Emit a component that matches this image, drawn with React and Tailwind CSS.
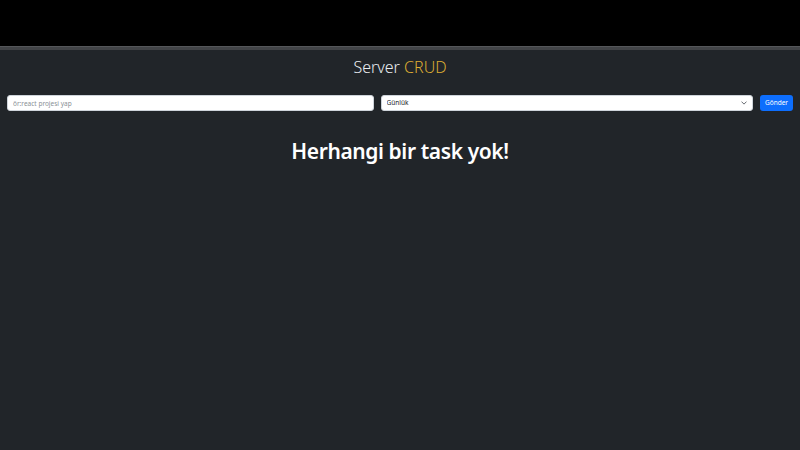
import React from 'react';

export default function App() {
  const [task, setTask] = React.useState('');
  const [period, setPeriod] = React.useState('Günlük');

  return (
    <div className="w-[800px] h-[450px] flex flex-col bg-[#212529] overflow-hidden" style={{ fontFamily: '"Noto Sans", "Open Sans", sans-serif' }}>
      <div className="h-[46px] bg-black shrink-0" />
      <div className="h-[4px] bg-[#424447] border-t border-[#55575a] shrink-0" />

      <h1 className="mt-[4px] text-center text-[16px] font-light text-[#e9ecef] leading-[26px]">
        Server <span className="text-[#dcac33]">CRUD</span>
      </h1>

      <form
        className="mt-[15px] px-[7px] flex items-center gap-[7px] text-[7px] leading-none"
        onSubmit={(e) => e.preventDefault()}
      >
        <input
          value={task}
          onChange={(e) => setTask(e.target.value)}
          placeholder="ör:react projesi yap"
          className="block w-[367px] h-[16px] rounded-[3px] bg-white border border-[#ced4da] px-[5px] text-[6.5px] text-[#212529] placeholder:text-[#8a9096] outline-none"
        />
        <div className="relative w-[373px] h-[16px]">
          <select
            value={period}
            onChange={(e) => setPeriod(e.target.value)}
            className="block appearance-none w-full h-[16px] rounded-[3px] bg-white border border-[#ced4da] px-[5px] text-[6.5px] text-[#212529] outline-none"
          >
            <option>Günlük</option>
            <option>Haftalık</option>
            <option>Aylık</option>
          </select>
          <svg className="absolute right-[6px] top-[5px] w-[6px] h-[6px] pointer-events-none" viewBox="0 0 16 16" fill="none">
            <path d="M2 5l6 6 6-6" stroke="#343a40" strokeWidth="2" strokeLinecap="round" strokeLinejoin="round" />
          </svg>
        </div>
        <button
          type="submit"
          className="block w-[33px] h-[16px] rounded-[3px] bg-[#0d6efd] text-white text-[6.5px] leading-none"
        >
          Gönder
        </button>
      </form>

      <h2 className="mt-[24px] text-center text-[21px] font-semibold tracking-[-0.4px] text-white leading-[32px]">
        Herhangi bir task yok!
      </h2>
    </div>
  );
}
